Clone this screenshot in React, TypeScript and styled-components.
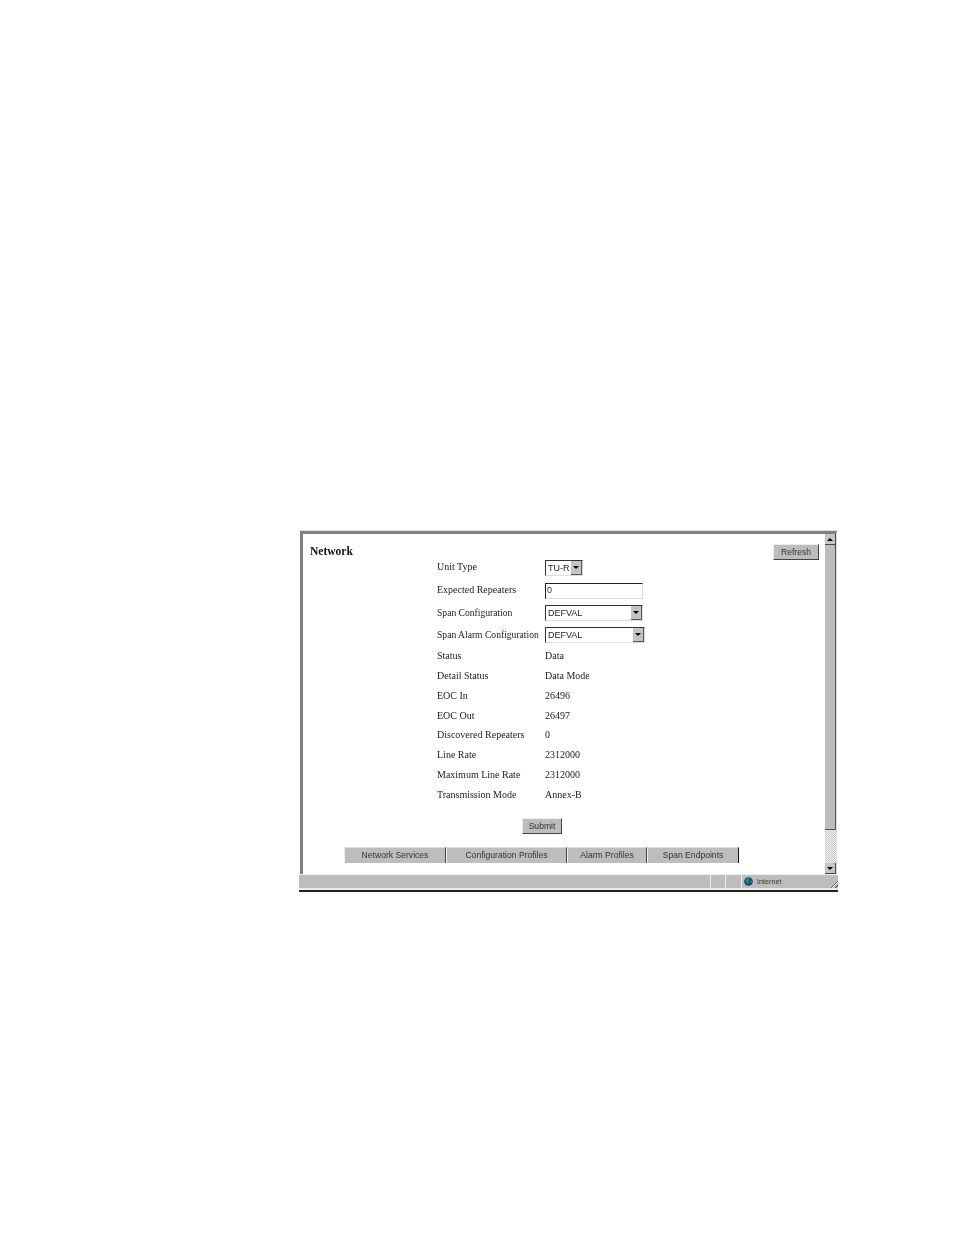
import styled, { createGlobalStyle } from 'styled-components';

const GlobalStyle = createGlobalStyle`
  html, body {
    margin: 0;
    padding: 0;
    background: #fff;
  }
`;

const Page = styled.div`
  width: 954px;
  height: 1235px;
  padding: 530px 0 0 299px;
  box-sizing: border-box;
  overflow: hidden;
`;

const Browser = styled.div`
  width: 539px;
  height: 362px;
  display: flex;
  flex-direction: column;
  background: #fff;
  border-top: 1px solid #ddd;
  border-bottom: 2px solid #222;
  box-sizing: border-box;
  filter: blur(0.3px);
`;

const Viewport = styled.div`
  flex: 1;
  min-height: 0;
  margin: 0 1px 0 1px;
  display: flex;
  border-top: 3px solid #808080;
  border-left: 3px solid #808080;
  border-right: 1px solid #ddd;
`;

const Main = styled.div`
  flex: 1;
  min-width: 0;
  display: flex;
  flex-direction: column;
`;

const Header = styled.div`
  height: 27px;
  padding: 10px 6px 0 7px;
  display: flex;
  justify-content: space-between;
  align-items: flex-start;
`;

const Title = styled.div`
  font: bold 11.5px "Liberation Serif", serif;
  color: #111;
  margin-top: 1px;
`;

const PushButton = styled.button`
  width: ${({ $w }: { $w: number }) => $w}px;
  height: 16px;
  padding: 0;
  font: 8.6px "Liberation Sans", sans-serif;
  color: #333;
  background: #bdbdbd;
  border: 1px solid;
  border-color: #eee #444 #444 #eee;
`;

const Form = styled.div`
  margin: -15px 0 0 134px;
  display: flex;
  flex-direction: column;
`;

const FormRow = styled.div`
  height: ${({ $h }: { $h: number }) => $h}px;
  display: grid;
  grid-template-columns: 108px 1fr;
  align-items: center;
  font: 10px "Liberation Serif", serif;
  color: #222;
  white-space: nowrap;
`;

const FieldLabel = styled.span<{ $narrow?: boolean; $raised?: boolean }>`
  font-size: ${({ $narrow }) => ($narrow ? '9.6px' : '10px')};
  padding-bottom: ${({ $raised }) => ($raised ? '2px' : '0')};
`;

const Select = styled.div`
  width: ${({ $w }: { $w: number }) => $w}px;
  height: 16px;
  box-sizing: border-box;
  display: flex;
  align-items: center;
  justify-content: space-between;
  padding-left: 2px;
  font: 9px "Liberation Sans", sans-serif;
  color: #222;
  border: 1px solid;
  border-color: #333 #ddd #ddd #333;
`;

const SelectArrow = styled.span`
  width: 11px;
  height: 14px;
  background: #c4c4c4;
  border-right: 1px solid #555;
  border-bottom: 1px solid #555;
  box-sizing: border-box;
  display: flex;
  align-items: center;
  justify-content: center;
  &::after {
    content: '';
    border: 3px solid transparent;
    border-top: 3px solid #000;
    border-bottom: 0;
  }
`;

const TextBox = styled.div`
  width: 98px;
  height: 16px;
  box-sizing: border-box;
  padding-left: 1px;
  font: 9px "Liberation Sans", sans-serif;
  line-height: 13px;
  color: #333;
  border: 1px solid;
  border-color: #222 #ddd #ddd #222;
`;

const SubmitRow = styled.div`
  margin: 11px 0 0 219px;
`;

const Tabs = styled.div`
  margin: 13px 0 0 41px;
  display: flex;
`;

const Tab = styled.div`
  width: ${({ $w }: { $w: number }) => $w}px;
  height: 16px;
  box-sizing: border-box;
  text-align: center;
  font: 8.6px/14px "Liberation Sans", sans-serif;
  color: #333;
  background: #bdbdbd;
  border-right: 1px solid #444;
  border-top: 1px solid #ddd;
  border-left: 1px solid #eee;
  &:last-child {
    border-right-color: #111;
  }
`;

const ScrollBar = styled.div`
  width: 11px;
  display: flex;
  flex-direction: column;
  background: #fff;
`;

const ScrollButton = styled.div`
  width: 11px;
  height: 11px;
  background: #c4c4c4;
  border-right: 1px solid #444;
  border-bottom: 1px solid #444;
  box-sizing: border-box;
  display: flex;
  align-items: center;
  justify-content: center;
  &::after {
    content: '';
    border: 3px solid transparent;
    ${({ $up }: { $up?: boolean }) =>
      $up
        ? 'border-bottom: 3px solid #000; border-top: 0;'
        : 'border-top: 3px solid #000; border-bottom: 0;'}
  }
`;

const ScrollThumb = styled.div`
  height: 285px;
  background: #bdbdbd;
  border-right: 1px solid #555;
  border-bottom: 1px solid #555;
  box-sizing: border-box;
`;

const ScrollTrack = styled.div`
  flex: 1;
  background: repeating-conic-gradient(#c8c8c8 0 25%, #f4f4f4 0 50%) 0 0 / 2px 2px;
`;

const StatusBar = styled.div`
  height: 13px;
  display: flex;
  background: #bdbdbd;
  border-top: 1px solid #eee;
  border-bottom: 2px solid #eee;
  font: 7.2px "Liberation Sans", sans-serif;
  color: #333;
`;

const StatusCell = styled.div`
  width: ${({ $w }: { $w: number }) => $w}px;
  flex: ${({ $w }: { $w: number }) => ($w ? 'none' : 1)};
  border-right: 1px solid #eee;
  display: flex;
  align-items: center;
  gap: 4px;
  padding-left: 2px;
  box-sizing: border-box;
  &:last-child {
    border-right: 0;
    position: relative;
  }
`;

const Grip = styled.span`
  position: absolute;
  right: 0;
  bottom: 0;
  width: 10px;
  height: 10px;
  background: repeating-linear-gradient(135deg, transparent 0 1.5px, #666 1.5px 2.5px, #eee 2.5px 3.5px);
  clip-path: polygon(100% 0, 100% 100%, 0 100%);
`;

const rows = [
  ['Status', 'Data'],
  ['Detail Status', 'Data Mode'],
  ['EOC In', '26496'],
  ['EOC Out', '26497'],
  ['Discovered Repeaters', '0'],
  ['Line Rate', '2312000'],
  ['Maximum Line Rate', '2312000'],
  ['Transmission Mode', 'Annex-B'],
];

const tabs: [string, number][] = [
  ['Network Services', 102],
  ['Configuration Profiles', 121],
  ['Alarm Profiles', 80],
  ['Span Endpoints', 92],
];

function Globe() {
  return (
    <svg width="9" height="9" viewBox="0 0 10 10">
      <circle cx="5" cy="5" r="4.8" fill="#1c3f9e" />
      <path d="M2 3l2-2 2 1-1 2 1 2-2 2-1-2-1-1zM7 4l2 0 0 2-2 1z" fill="#2c9a3a" />
    </svg>
  );
}

export default function App() {
  return (
    <Page>
      <GlobalStyle />
      <Browser>
        <Viewport>
          <Main>
            <Header>
              <Title>Network</Title>
              <PushButton $w={46}>Refresh</PushButton>
            </Header>
            <Form>
              <FormRow $h={23}>
                <FieldLabel $raised>Unit Type</FieldLabel>
                <Select $w={38}>TU-R<SelectArrow /></Select>
              </FormRow>
              <FormRow $h={23}>
                <FieldLabel $raised>Expected Repeaters</FieldLabel>
                <TextBox>0</TextBox>
              </FormRow>
              <FormRow $h={22}>
                <FieldLabel $raised $narrow>Span Configuration</FieldLabel>
                <Select $w={98}>DEFVAL<SelectArrow /></Select>
              </FormRow>
              <FormRow $h={22}>
                <FieldLabel $raised $narrow>Span Alarm Configuration</FieldLabel>
                <Select $w={100}>DEFVAL<SelectArrow /></Select>
              </FormRow>
              {rows.map(([label, value]) => (
                <FormRow key={label} $h={19.75}>
                  <FieldLabel>{label}</FieldLabel>
                  <span>{value}</span>
                </FormRow>
              ))}
            </Form>
            <SubmitRow>
              <PushButton $w={40}>Submit</PushButton>
            </SubmitRow>
            <Tabs>
              {tabs.map(([label, w]) => (
                <Tab key={label} $w={w}>{label}</Tab>
              ))}
            </Tabs>
          </Main>
          <ScrollBar>
            <ScrollButton $up />
            <ScrollThumb />
            <ScrollTrack />
            <ScrollButton />
          </ScrollBar>
        </Viewport>
        <StatusBar>
          <StatusCell $w={0} />
          <StatusCell $w={15} />
          <StatusCell $w={16} />
          <StatusCell $w={96}><Globe />Internet<Grip /></StatusCell>
        </StatusBar>
      </Browser>
    </Page>
  );
}
